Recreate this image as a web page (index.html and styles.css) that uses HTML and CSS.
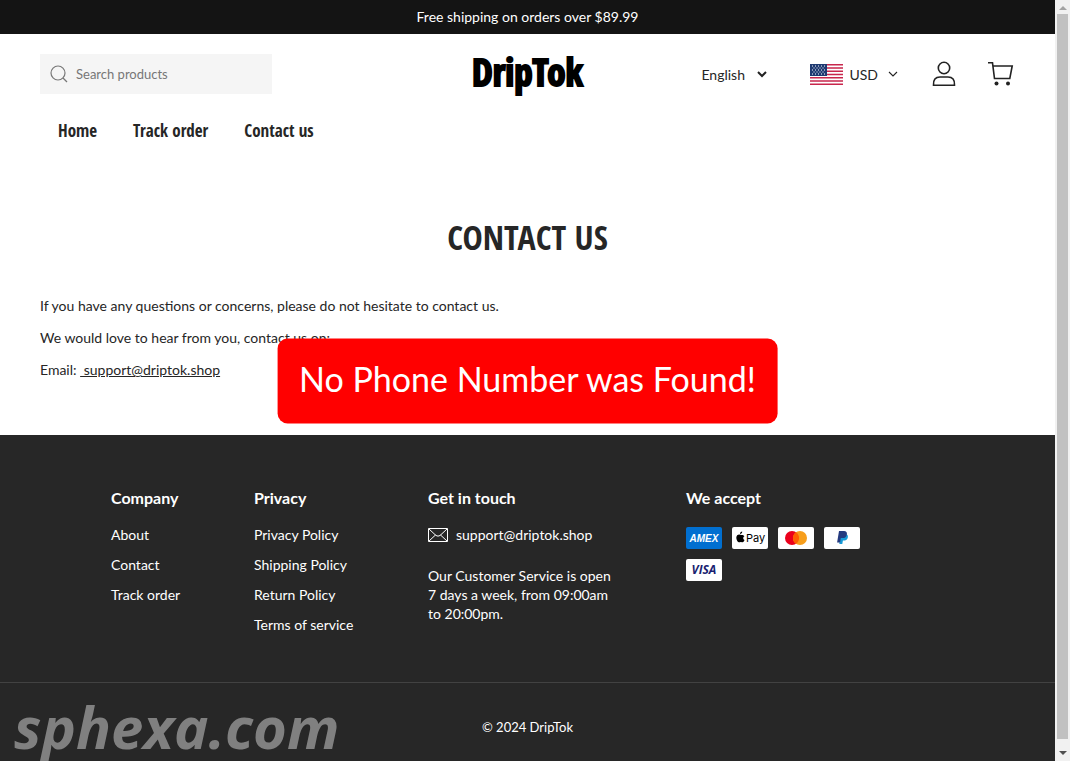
FILE: index.html
```html
<!DOCTYPE html>
<html lang="en">
<head>
    <meta charset="UTF-8">
    <meta name="viewport" content="width=device-width, initial-scale=1.0">
    <title>Contact us - DripTok</title>
    <link rel="stylesheet" href="styles.css">
</head>
<body>

<div class="page">

    <div class="announcement">Free shipping on orders over $89.99</div>

    <!-- Header -->
    <header class="header">
        <div class="header-top">
            <form class="search">
                <svg width="18" height="18" viewBox="0 0 18 18" fill="none" stroke="#777" stroke-width="1.2">
                    <circle cx="8" cy="8" r="7"/>
                    <path d="M13 13l4 4"/>
                </svg>
                <input type="text" placeholder="Search products" aria-label="Search products">
            </form>

            <a class="logo" href="#">DripTok</a>

            <div class="header-tools">
                <div class="language">
                    <select aria-label="Language">
                        <option>English</option>
                    </select>
                    <svg width="10" height="7" viewBox="0 0 10 7" fill="none" stroke="#222" stroke-width="2">
                        <path d="M1 1l4 4 4-4"/>
                    </svg>
                </div>
                <button class="currency">
                    <svg width="33" height="21" viewBox="0 0 33 21">
                        <path fill="#fff" d="M0 0h33v21H0z"/>
                        <path stroke="#c8264c" stroke-width="1.6" d="M0 .8h33M0 4h33M0 7.3h33M0 10.5h33M0 13.7h33M0 17h33M0 20.2h33"/>
                        <path fill="#1f3a72" d="M0 0h17v12H0z"/>
                        <path stroke="#fff" stroke-width="1" stroke-dasharray="1 2" d="M2 2h14M3.500 4h12M2 6h14M3.500 8h12M2 10h14"/>
                    </svg>
                    <span>USD</span>
                    <svg class="currency-arrow" width="10" height="6" viewBox="0 0 10 6" fill="none" stroke="#222" stroke-width="1.1">
                        <path d="M1 1l4 4 4-4"/>
                    </svg>
                </button>
                <a class="account" href="#" aria-label="Account">
                    <svg width="24" height="26" viewBox="0 0 24 26" fill="none" stroke="#222" stroke-width="1.6">
                        <circle cx="12" cy="7" r="5.700"/>
                        <path d="M1.500 24.200c-.4-5.500 2-8.200 6.500-8.200h8c4.500 0 6.900 2.700 6.500 8.200z"/>
                    </svg>
                </a>
                <a class="cart" href="#" aria-label="Cart">
                    <svg width="26" height="26" viewBox="0 0 26 26" fill="none" stroke="#222" stroke-width="1.6">
                        <path d="M0 1.800h4.500l2 15.700h15.300L24.200 5H5"/>
                        <circle cx="8.500" cy="22.500" r="2" fill="#222" stroke="none"/>
                        <circle cx="20" cy="22.500" r="2" fill="#222" stroke="none"/>
                    </svg>
                </a>
            </div>
        </div>

        <nav class="menu">
            <a href="#">Home</a>
            <a href="#">Track order</a>
            <a href="#">Contact us</a>
        </nav>
    </header>

    <!-- Content -->
    <main class="content">
        <h1>CONTACT US</h1>
        <p>If you have any questions or concerns, please do not hesitate to contact us.</p>
        <p>We would love to hear from you, contact us on:</p>
        <p>Email: <a href="mailto:support@driptok.shop">&nbsp;support@driptok.shop</a></p>
    </main>

    <!-- Footer -->
    <footer class="footer">
        <div class="footer-columns">
            <div>
                <h2>Company</h2>
                <ul>
                    <li><a href="#">About</a></li>
                    <li><a href="#">Contact</a></li>
                    <li><a href="#">Track order</a></li>
                </ul>
            </div>
            <div>
                <h2>Privacy</h2>
                <ul>
                    <li><a href="#">Privacy Policy</a></li>
                    <li><a href="#">Shipping Policy</a></li>
                    <li><a href="#">Return Policy</a></li>
                    <li><a href="#">Terms of service</a></li>
                </ul>
            </div>
            <div>
                <h2>Get in touch</h2>
                <a class="footer-mail" href="mailto:support@driptok.shop">
                    <svg width="20" height="14" viewBox="0 0 20 14" fill="none" stroke="#fff">
                        <path d="M.5.5h19v13H.5z"/>
                        <path d="M1 1l7 6.500q2 1.300 4 0L19 1M1 13l6.500-6M19 13l-6.500-6"/>
                    </svg>
                    support@driptok.shop
                </a>
                <p>Our Customer Service is open<br>7 days a week, from 09:00am<br>to 20:00pm.</p>
            </div>
            <div>
                <h2>We accept</h2>
                <div class="cards">
                    <svg width="36" height="22" viewBox="0 0 36 22" role="img" aria-label="American Express">
                        <rect width="36" height="22" rx="2" fill="#016fd0"/>
                        <text class="amex" x="18" y="15" text-anchor="middle">AMEX</text>
                    </svg>
                    <svg width="36" height="22" viewBox="0 0 36 22" role="img" aria-label="Apple Pay">
                        <rect width="36" height="22" rx="2" fill="#fff"/>
                        <path d="M9.500 7.900c-.9 0-1.400-.5-2.300-.5-1.500 0-2.900 1.200-2.900 3.300 0 2.100 1.400 4.600 2.700 4.600.7 0 1-.4 1.800-.4s1 .4 1.700.4c1 0 1.700-1.300 2-2.200-1.700-.8-1.700-3.100-.1-3.900-.6-1-1.800-1.400-2.900-1.300zM8 7c-.1-1.300 1-2.400 2.200-2.500C10.400 5.800 9.300 7 8 7z"/>
                        <text class="apple-pay" x="14" y="15">Pay</text>
                    </svg>
                    <svg width="36" height="22" viewBox="0 0 36 22" role="img" aria-label="Mastercard">
                        <rect width="36" height="22" rx="2" fill="#fff"/>
                        <circle cx="14" cy="11" r="7" fill="#eb001b"/>
                        <circle cx="22" cy="11" r="7" fill="#f79e1b"/>
                        <path fill="#ff5f00" d="M18 5.200a7 7 0 0 1 0 11.600 7 7 0 0 1 0-11.600z"/>
                    </svg>
                    <svg width="36" height="22" viewBox="0 0 36 22" role="img" aria-label="PayPal">
                        <rect width="36" height="22" rx="2" fill="#fff"/>
                        <path fill="#179bd7" d="M16.500 7.500h6.400c1.300 1 1.200 2.600.6 4-.7 1.500-2 2-3.600 2h-1l-.6 3.500h-3z"/>
                        <path fill="#253b80" d="M15 4h5c2.200 0 3.300 1.300 2.900 3.400-.4 2.400-2 3.600-4.300 3.600h-1.800l-.7 4.400h-3z"/>
                    </svg>
                    <svg width="36" height="22" viewBox="0 0 36 22" role="img" aria-label="Visa">
                        <rect width="36" height="22" rx="2" fill="#fff"/>
                        <text class="visa" x="18" y="15" text-anchor="middle">VISA</text>
                    </svg>
                </div>
            </div>
        </div>
        <div class="copyright">© 2024 DripTok</div>
    </footer>

    <div class="banner">No Phone Number was Found!</div>
    <div class="watermark">sphexa.com</div>
</div>

<!-- Scroll bar -->
<div class="scrollbar">
    <span class="scroll-up"></span>
    <div class="scroll-thumb"></div>
    <span class="scroll-down"></span>
</div>

</body>
</html>
```

FILE: styles.css
```css
* {
    box-sizing: border-box;
}

body {
    margin: 0;
    display: flex;
    min-height: 100vh;
    font-family: Lato, sans-serif;
    font-size: 14px;
    color: #262626;
    background-color: #fff;
}

a {
    color: inherit;
    text-decoration: none;
}

svg {
    display: block;
    flex-shrink: 0;
}

.page {
    position: relative;
    flex: 1;
    display: flex;
    flex-direction: column;
    overflow: hidden;
}

.announcement {
    height: 34px;
    line-height: 34px;
    background-color: #141414;
    color: #fff;
    text-align: center;
}

/* Header */
.header {
    padding: 16px 40px 0;
}

.header-top {
    display: grid;
    grid-template-columns: 1fr auto 1fr;
    align-items: center;
    height: 48px;
}

.search {
    display: flex;
    align-items: center;
    gap: 8px;
    width: 232px;
    height: 40px;
    padding: 0 10px;
    background-color: #f5f5f5;
}

.search input {
    width: 100%;
    padding: 0;
    border: none;
    outline: none;
    background: none;
    font-family: inherit;
    font-size: 13px;
}

.search input::placeholder {
    color: #777;
}

.logo {
    padding-bottom: 4px;
    font-family: "Noto Sans ExtraCondensed", "Open Sans Condensed", "Roboto Condensed", sans-serif;
    font-size: 37px;
    font-weight: 900;
    line-height: 44px;
    color: #000;
    -webkit-text-stroke: 2px #000;
}

.header-tools {
    display: flex;
    align-items: center;
    justify-content: flex-end;
    padding-right: 1px;
}

.language {
    display: flex;
    align-items: center;
    gap: 12px;
    margin-right: 43px;
}

.language select {
    appearance: none;
    padding: 0;
    border: none;
    background: none;
    font: inherit;
    color: inherit;
}

.currency {
    display: flex;
    align-items: center;
    gap: 6px;
    margin-right: 34px;
    padding: 0;
    border: none;
    background: none;
    font: inherit;
    color: inherit;
}

.currency-arrow {
    margin-left: 4px;
}

.account {
    margin-right: 32px;
}

.menu {
    display: flex;
    gap: 36px;
    padding: 21px 18px 0;
    font-family: "Noto Sans ExtraCondensed", "Open Sans Condensed", "Roboto Condensed", sans-serif;
    font-size: 17px;
    font-weight: 600;
    line-height: 24px;
}

/* Content */
.content {
    padding: 66px 40px 49px;
}

.content h1 {
    margin: 0 0 25px;
    font-family: "Noto Sans ExtraCondensed", "Open Sans Condensed", "Roboto Condensed", sans-serif;
    font-size: 34px;
    font-weight: 600;
    line-height: 56px;
    text-align: center;
}

.content p {
    margin: 0;
    line-height: 32px;
}

.content p a {
    text-decoration: underline;
}

/* Footer */
.footer {
    flex: 1;
    background-color: #272727;
    color: #fff;
}

.footer-columns {
    display: grid;
    grid-template-columns: 71px 102px 186px 258px;
    justify-content: center;
    gap: 72px;
    height: 248px;
    padding-top: 52px;
    border-bottom: 1px solid #424242;
    white-space: nowrap;
}

.footer h2 {
    margin: 0 0 14px;
    font-size: 16px;
    line-height: 22px;
}

.footer ul {
    margin: 0;
    padding: 0;
    list-style: none;
    line-height: 24px;
}

.footer li {
    margin-bottom: 6px;
}

.footer-mail {
    display: flex;
    align-items: center;
    gap: 8px;
    line-height: 24px;
}

.footer p {
    margin: 19px 0 0;
    line-height: 19px;
}

.cards {
    display: flex;
    flex-wrap: wrap;
    gap: 10px;
    width: 184px;
    padding-top: 4px;
}

.amex {
    font: italic bold 10px "Liberation Sans", sans-serif;
    fill: #fff;
}

.apple-pay {
    font: 11px Inter, sans-serif;
}

.visa {
    font: italic bold 12px "Open Sans", sans-serif;
    fill: #1a1f71;
}

.copyright {
    padding: 34px 0 24px;
    font-size: 13px;
    line-height: 20px;
    text-align: center;
}

/* Message over the page */
.banner {
    position: absolute;
    top: 50%;
    left: 50%;
    transform: translate(-50%, -50%);
    padding: 17px 22px 23px;
    border-radius: 10px;
    background-color: #f00;
    color: #fff;
    font-size: 34px;
    line-height: 45px;
    white-space: nowrap;
}

.watermark {
    position: absolute;
    left: 14px;
    bottom: -6px;
    font-family: "Open Sans", sans-serif;
    font-size: 58px;
    font-style: italic;
    font-weight: bold;
    line-height: 80px;
    color: #808080;
}

/* Scroll bar */
.scrollbar {
    display: flex;
    flex-direction: column;
    align-items: center;
    gap: 4px;
    width: 15px;
    padding: 6px 0;
    background-color: #f1f1f1;
}

.scroll-thumb {
    flex: 1;
    width: 11px;
    margin-bottom: 8px;
    background-color: #c1c1c1;
}

.scroll-up,
.scroll-down {
    border: 4px solid transparent;
}

.scroll-up {
    border-top: none;
    border-bottom-color: #a3a3a3;
}

.scroll-down {
    border-bottom: none;
    border-top-color: #505050;
}
```
